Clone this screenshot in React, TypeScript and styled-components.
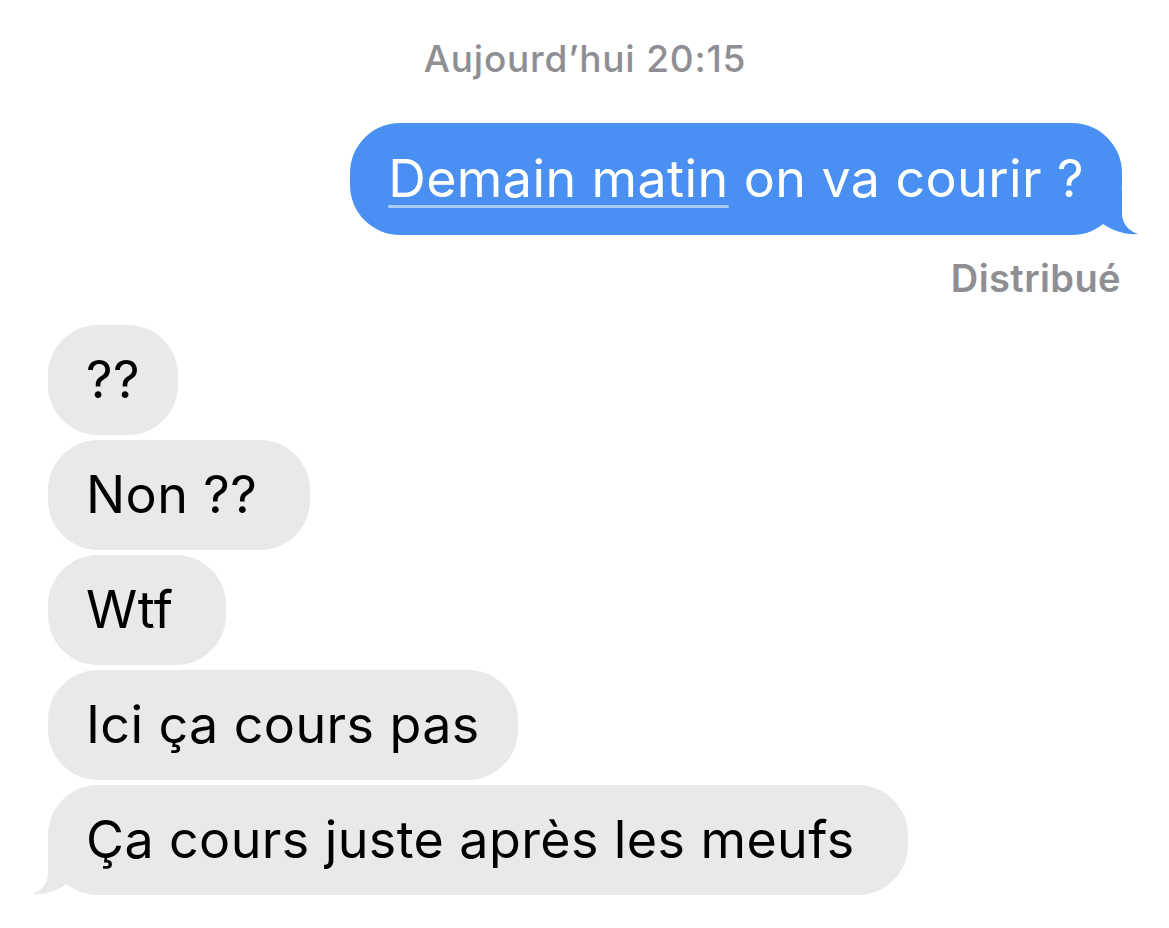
import React from "react";
import styled, { createGlobalStyle } from "styled-components";

type Side = "me" | "them";

interface Message {
  id: number;
  from: Side;
  text: React.ReactNode;
  tail?: boolean;
}

const GlobalStyle = createGlobalStyle`
  html, body {
    margin: 0;
    padding: 0;
    background: #ffffff;
  }
  body {
    font-family: Inter, "Liberation Sans", Arial, sans-serif;
    -webkit-font-smoothing: antialiased;
  }
`;

const received: Message[] = [
  { id: 1, from: "them", text: "??" },
  { id: 2, from: "them", text: "Non ?? " },
  { id: 3, from: "them", text: "Wtf " },
  { id: 4, from: "them", text: "Ici ça cours pas" },
  { id: 5, from: "them", text: "Ça cours juste après les meufs ", tail: true },
];

/** queue de bulle, dessinée pour le côté droit et retournée pour la gauche */
const Tail = ({ color }: { color: string }) => (
  <svg width="50" height="45" viewBox="0 0 50 45">
    <path
      d="M0 0 L30 0 L30 23 C30 34 37 41 46 44 C36 45.5 20 41 10 33 L0 24 Z"
      fill={color}
    />
  </svg>
);

const App = (): JSX.Element => {
  return (
    <>
      <GlobalStyle />
      <Thread>
        <Stamp>Aujourd’hui 20:15</Stamp>

        <Sent>
          <Bubble $from="me">
            <Link>Demain matin</Link> on va courir ?
            <TailSlot $from="me">
              <Tail color="#4a90f2" />
            </TailSlot>
          </Bubble>
        </Sent>
        <Status>Distribué</Status>

        <Group>
          {received.map((m) => (
            <Row key={m.id} $from={m.from}>
              <Bubble $from={m.from}>
                {m.text}
                {m.tail && (
                  <TailSlot $from={m.from}>
                    <Tail color="#e9e9eb" />
                  </TailSlot>
                )}
              </Bubble>
            </Row>
          ))}
        </Group>
      </Thread>
    </>
  );
};

const Thread = styled.div`
  width: 1169px;
  height: 928px;
  box-sizing: border-box;
  padding: 37px 47px 0 48px;
  display: flex;
  flex-direction: column;
  overflow: hidden;
`;

const Stamp = styled.div`
  text-align: center;
  font-size: 37px;
  font-weight: 500;
  line-height: 44px;
  color: #8e8e93;
  letter-spacing: 0.8px;
`;

const Row = styled.div<{ $from: Side }>`
  display: flex;
  justify-content: ${({ $from }) => ($from === "me" ? "flex-end" : "flex-start")};
`;

const Sent = styled(Row).attrs({ $from: "me" as Side })`
  margin-top: 42px;
`;

const Bubble = styled.div<{ $from: Side }>`
  position: relative;
  box-sizing: border-box;
  height: ${({ $from }) => ($from === "me" ? "112px" : "110px")};
  display: flex;
  align-items: center;
  padding: 0 38px;
  border-radius: 50px;
  white-space: pre;
  font-size: 52px;
  line-height: 64px;
  letter-spacing: 0.4px;
  background: ${({ $from }) => ($from === "me" ? "#4a90f2" : "#e9e9eb")};
  color: ${({ $from }) => ($from === "me" ? "#ffffff" : "#000000")};
`;

const Link = styled.span`
  text-decoration: underline;
  text-decoration-color: rgba(255, 255, 255, 0.55);
  text-decoration-thickness: 3px;
  text-underline-offset: 8px;
`;

const TailSlot = styled.span<{ $from: Side }>`
  position: absolute;
  bottom: 0;
  display: block;
  line-height: 0;
  ${({ $from }) =>
    $from === "me" ? "right: -20px;" : "left: -20px; transform: scaleX(-1);"}
`;

const Status = styled.div`
  text-align: right;
  margin-top: 21px;
  padding-right: 1px;
  font-size: 38px;
  font-weight: 600;
  line-height: 44px;
  letter-spacing: 0.4px;
  color: #8e8e93;
`;

const Group = styled.div`
  display: flex;
  flex-direction: column;
  gap: 5px;
  margin-top: 25px;
`;

export default App;
